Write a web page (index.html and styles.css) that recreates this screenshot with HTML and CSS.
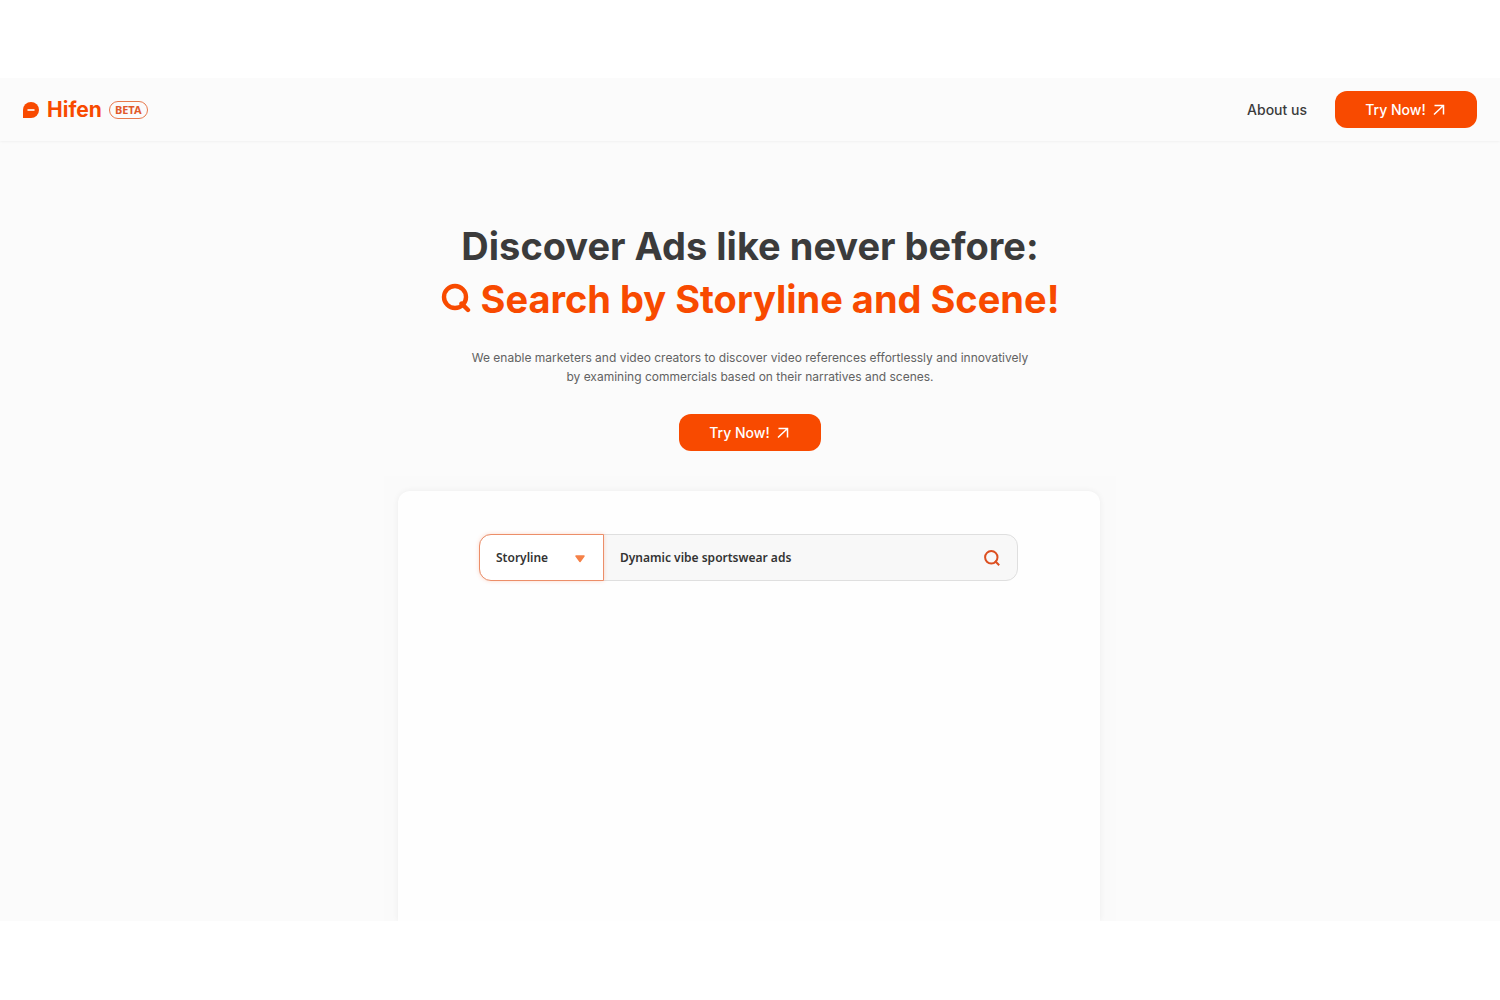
FILE: index.html
```html
<!DOCTYPE html>
<html lang="en">
<head>
    <meta charset="UTF-8">
    <meta name="viewport" content="width=device-width, initial-scale=1.0">
    <title>Hifen</title>
    <link rel="stylesheet" href="styles.css">
</head>
<body>
    <div class="page">
        <header class="header">
            <a href="#" class="logo">
                <svg class="logo-mark" width="16" height="16" viewBox="0 0 16 16">
                    <path d="M0 16V8a8 8 0 1 1 8 8z" fill="#f84a00"/>
                    <path d="M4.5 8h7" stroke="#fff" stroke-width="1.6"/>
                </svg>
                <span class="logo-name">Hifen</span>
                <span class="badge">BETA</span>
            </a>
            <nav class="nav">
                <a href="#about" class="nav-link">About us</a>
                <a href="#try" class="btn">
                    Try Now!
                    <svg width="12" height="12" viewBox="0 0 12 12" fill="none" stroke="#fff" stroke-width="1.5">
                        <path d="M1 10.5L10.5 1.5M1.5 1.5h9v9"/>
                    </svg>
                </a>
            </nav>
        </header>

        <main class="hero">
            <h1 class="title">
                <span>Discover Ads like never before:</span>
                <span class="title-accent">
                    <svg class="title-icon" width="30" height="30" viewBox="0 0 30 30" fill="none" stroke="#f84a00" stroke-width="4.4">
                        <circle cx="14" cy="14" r="11"/>
                        <path d="M20.5 20.5l6.5 6.5" stroke-linecap="round"/>
                    </svg>
                    Search by Storyline and Scene!
                </span>
            </h1>
            <p class="subtitle">
                We enable marketers and video creators to discover video references effortlessly and innovatively<br>
                by examining commercials based on their narratives and scenes.
            </p>
            <a href="#try" class="btn">
                Try Now!
                <svg width="12" height="12" viewBox="0 0 12 12" fill="none" stroke="#fff" stroke-width="1.5">
                    <path d="M1 10.5L10.5 1.5M1.5 1.5h9v9"/>
                </svg>
            </a>

            <div class="preview">
                <div class="card">
                    <form class="search">
                        <div class="search-type">
                            <select class="type-select" aria-label="Search type">
                                <option>Storyline</option>
                                <option>Scene</option>
                            </select>
                            <svg class="caret" width="10" height="8" viewBox="0 0 10 8">
                                <path d="M1 1h8L5 6.5z" fill="#f58148" stroke="#f58148" stroke-width="1.5" stroke-linejoin="round"/>
                            </svg>
                        </div>
                        <input class="search-input" type="text" value="Dynamic vibe sportswear ads" aria-label="Search ads">
                        <button class="search-btn" type="submit" aria-label="Search">
                            <svg width="16" height="16" viewBox="0 0 16 16" fill="none" stroke="#dc4f20" stroke-width="2">
                                <circle cx="7.3" cy="7.3" r="6.2"/>
                                <path d="M11 11l4.2 4.2"/>
                            </svg>
                        </button>
                    </form>
                </div>
            </div>
        </main>
    </div>
</body>
</html>
```
FILE: styles.css
```css
* {
    box-sizing: border-box;
}
body {
    margin: 0;
    height: 100vh;
    padding: 78px 0 79px;
    font-family: Inter, sans-serif;
    background: #fff;
    color: #3b3b3b;
}
a {
    color: inherit;
    text-decoration: none;
}
.page {
    display: flex;
    flex-direction: column;
    height: 100%;
    overflow: hidden;
    background: #fbfbfb;
}
.header {
    display: flex;
    flex-shrink: 0;
    align-items: center;
    justify-content: space-between;
    height: 63px;
    padding: 0 23px;
    box-shadow: 0 0 3px rgba(0, 0, 0, 0.08);
}
.logo {
    display: flex;
    align-items: center;
    color: #f84a00;
}
.logo-name {
    margin: 0 7px 0 8px;
    font-size: 21px;
    font-weight: 700;
}
.badge {
    padding: 0 5px;
    border: 1px solid #e8794c;
    border-radius: 9px;
    font-family: "Noto Sans", sans-serif;
    font-size: 11px;
    font-weight: 700;
    line-height: 16px;
    color: #e2592a;
}
.nav {
    display: flex;
    align-items: center;
    gap: 28px;
}
.nav-link {
    font-size: 14px;
    font-weight: 500;
}
.btn {
    display: flex;
    align-items: center;
    justify-content: center;
    gap: 7px;
    width: 142px;
    height: 37px;
    padding-right: 2px;
    border-radius: 12px;
    background: #f84a00;
    color: #fff;
    font-size: 14px;
    font-weight: 500;
}
.hero {
    display: flex;
    flex: 1;
    flex-direction: column;
    align-items: center;
    min-height: 0;
    padding-top: 79px;
}
.title {
    display: flex;
    flex-direction: column;
    align-items: center;
    margin: 0 0 22px;
    font-size: 38px;
    font-weight: 700;
    line-height: 53px;
}
.title-accent {
    display: flex;
    align-items: center;
    gap: 10px;
    color: #f84a00;
}
.title-icon {
    margin-bottom: 4px;
}
.subtitle {
    margin: 0 0 28px;
    font-size: 12px;
    line-height: 19px;
    text-align: center;
    color: #626262;
}
.preview {
    display: flex;
    flex: 1;
    width: 100%;
    max-width: 732px;
    margin-top: 25px;
    padding: 15px 16px 0 14px;
    background: #fafafa;
}
.card {
    flex: 1;
    padding: 43px 82px 43px 81px;
    border-radius: 12px 12px 0 0;
    background: #fefefe;
    box-shadow: 0 0 6px rgba(0, 0, 0, 0.06);
}
.search {
    display: flex;
    height: 47px;
    border: 1px solid #dfdfdf;
    border-radius: 12px;
    background: #f8f8f8;
}
.search-type {
    position: relative;
    width: 125px;
    margin: -1px 0 -1px -1px;
}
.type-select, .search-input {
    height: 100%;
    padding: 0 16px;
    font-family: "Noto Sans", sans-serif;
    font-size: 12px;
    font-weight: 600;
    color: #333;
    outline: none;
}
.type-select {
    width: 100%;
    appearance: none;
    border: 1px solid #ec8e69;
    border-radius: 12px 0 0 12px;
    background: #fff;
    box-shadow: 0 0 4px rgba(249, 77, 0, 0.2);
}
.caret {
    position: absolute;
    top: 21px;
    right: 19px;
    pointer-events: none;
}
.search-input {
    flex: 1;
    min-width: 0;
    border: none;
    background: transparent;
}
.search-btn {
    display: flex;
    align-items: center;
    padding: 0 17px;
    border: none;
    background: transparent;
    cursor: pointer;
}
```
